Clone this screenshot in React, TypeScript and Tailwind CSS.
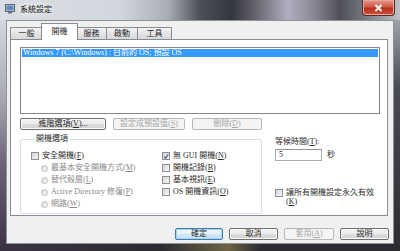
import React from 'react';

function K({ c }: { c: string }) {
  return (
    <>
      (<span className="underline">{c}</span>)
    </>
  );
}

function Check({ checked }: { checked?: boolean }) {
  return (
    <span className="w-[8px] h-[8px] shrink-0 border border-[#8e8f8f] bg-[linear-gradient(135deg,#d2d5da,#f8f8f8)] flex items-center justify-center">
      {checked && (
        <svg width="7" height="7" viewBox="0 0 7 7">
          <path d="M1 3.6 L2.9 5.4 L6.2 1" fill="none" stroke="#3e5c8a" strokeWidth="1.3" />
        </svg>
      )}
    </span>
  );
}

function Radio() {
  return (
    <span className="w-[7px] h-[7px] shrink-0 rounded-full border border-[#bcbcbc] bg-[linear-gradient(135deg,#dedede,#f6f6f6)]" />
  );
}

function Btn({
  children,
  className,
  disabled,
  primary,
}: {
  children: React.ReactNode;
  className: string;
  disabled?: boolean;
  primary?: boolean;
}) {
  const look = disabled
    ? 'border-[#b5b7ba] bg-[#f4f4f4] text-[#a6a6a6]'
    : primary
      ? 'border-[#3c7fb1] bg-[linear-gradient(180deg,#f2f8fc_0%,#e3f0f9_50%,#d3e7f5_51%,#c6dff2_100%)] shadow-[inset_0_0_0_1px_#a6d6f3]'
      : 'border-[#707070] bg-[linear-gradient(180deg,#f3f3f3_0%,#ebebeb_50%,#dddddd_51%,#d0d0d0_100%)] shadow-[inset_0_0_0_1px_#fbfbfb]';
  return (
    <div className={`h-[12px] rounded-[2px] border flex items-center justify-center ${look} ${className}`}>
      {children}
    </div>
  );
}

function Tab({ label, className }: { label: string; className: string }) {
  return (
    <div
      className={`h-[12px] -ml-px border border-b-0 border-[#898c95] bg-[linear-gradient(180deg,#f3f3f3,#e4e4e4_50%,#d9d9d9)] flex items-center justify-center ${className}`}
    >
      {label}
    </div>
  );
}

export default function App() {
  return (
    <div className="w-[400px] h-[251px] flex flex-col overflow-hidden text-[8px] leading-none text-[#2a2a2a] font-['Liberation_Serif','Noto_Sans_CJK_TC',serif] bg-[#3a3840]">
      {/* title bar */}
      <div className="h-[20px] shrink-0 flex items-start bg-[linear-gradient(90deg,#dadee4_0%,#d2d6dd_30%,#a9adb5_42%,#4c4f57_50%,#34363d_58%,#5d5d66_63%,#b2adbf_72%,#8d8a97_78%,#505157_85%,#6d7077_90%,#bfc3c9_100%)]">
        <svg className="ml-[5px] mt-[4px]" width="10" height="10" viewBox="0 0 10 10">
          <rect x="0.5" y="0.5" width="9" height="7" fill="#d9dde3" stroke="#5b6470" />
          <rect x="1.5" y="1.5" width="7" height="5" fill="#5f86b8" />
          <rect x="3" y="8" width="4" height="1.5" fill="#6d7480" />
        </svg>
        <span className="ml-[5px] mt-[6px] text-[#111] [text-shadow:0_0_4px_#fff,0_0_6px_#fff]">系統設定</span>
        <div className="flex-1" />
        <div className="mr-[5px] w-[33px] h-[16px] rounded-b-[4px] border border-t-0 border-[#5b2a25] bg-[linear-gradient(180deg,#e39a8c_0%,#cf5a48_45%,#b7311d_55%,#c9533c_100%)] shadow-[inset_0_0_0_1px_#e9a79b] flex items-center justify-center">
          <svg width="9" height="8" viewBox="0 0 9 8">
            <path d="M1.5 1 L7.5 7 M7.5 1 L1.5 7" stroke="#fff" strokeWidth="1.8" />
          </svg>
        </div>
      </div>

      <div className="flex flex-1 min-h-0">
        {/* left frame */}
        <div className="w-[6px] shrink-0 bg-[linear-gradient(180deg,#d4d8de_0%,#a9a8b2_35%,#6b6274_65%,#3f3748_100%)]" />

        {/* client */}
        <div className="w-[388px] shrink-0 border border-[#8d929a] bg-[#f0f0f0] flex flex-col">
          {/* tabs */}
          <div className="h-[18px] shrink-0 flex items-end pl-[3px]">
            <Tab label="一般" className="w-[33px] ml-0" />
            <div className="relative z-10 h-[17px] w-[37px] -mb-px -ml-[2px] -mr-[2px] border border-b-0 border-[#898c95] bg-white flex items-start justify-center pt-[4px]">
              開機
            </div>
            <Tab label="服務" className="w-[31px] ml-0" />
            <Tab label="啟動" className="w-[32px]" />
            <Tab label="工具" className="w-[35px]" />
          </div>

          {/* panel */}
          <div className="ml-[3px] w-[378px] h-[177px] shrink-0 border border-[#898c95] bg-white flex flex-col px-[9px]">
            <div className="mt-[7px] w-[360px] h-[67px] border border-[#828790] bg-white">
              <div className="mx-px mt-px h-[8px] bg-[#3399ff] text-white flex items-center pl-[1px] whitespace-nowrap">
                Windows 7 (C:\Windows) : 目前的 OS; 預設 OS
              </div>
            </div>

            <div className="mt-[4px] flex gap-[7px]">
              <Btn className="w-[86px]">
                進階選項<K c="V" />...
              </Btn>
              <Btn className="w-[72px]" disabled>
                設定成預設值<K c="S" />
              </Btn>
              <Btn className="w-[70px]" disabled>
                刪除<K c="D" />
              </Btn>
            </div>

            <div className="mt-[5px] flex">
              <fieldset className="w-[243px] h-[79px] border border-[#d5dfe5] rounded-[2px] flex pl-[10px] pt-[7px]">
                <legend className="ml-[3px] px-[2px]">開機選項</legend>
                <div className="w-[131px] flex flex-col">
                  <div className="h-[12px] flex items-center gap-[3px]">
                    <Check />
                    <span>
                      安全開機<K c="F" />
                    </span>
                  </div>
                  <div className="h-[12px] flex items-center gap-[3px] pl-[10px] text-[#8a8a8a]">
                    <Radio />
                    <span>
                      最基本安全開機方式<K c="M" />
                    </span>
                  </div>
                  <div className="h-[12px] flex items-center gap-[3px] pl-[10px] text-[#8a8a8a]">
                    <Radio />
                    <span>
                      替代殼層<K c="L" />
                    </span>
                  </div>
                  <div className="h-[12px] flex items-center gap-[3px] pl-[10px] text-[#8a8a8a]">
                    <Radio />
                    <span>
                      Active Directory 修復<K c="P" />
                    </span>
                  </div>
                  <div className="h-[12px] flex items-center gap-[3px] pl-[10px] text-[#8a8a8a]">
                    <Radio />
                    <span>
                      網路<K c="W" />
                    </span>
                  </div>
                </div>
                <div className="flex flex-col">
                  <div className="h-[12px] flex items-center gap-[3px]">
                    <Check checked />
                    <span>
                      無 GUI 開機<K c="N" />
                    </span>
                  </div>
                  <div className="h-[12px] flex items-center gap-[3px]">
                    <Check />
                    <span>
                      開機記錄<K c="B" />
                    </span>
                  </div>
                  <div className="h-[12px] flex items-center gap-[3px]">
                    <Check />
                    <span>
                      基本視訊<K c="E" />
                    </span>
                  </div>
                  <div className="h-[12px] flex items-center gap-[3px]">
                    <Check />
                    <span>
                      OS 開機資訊<K c="O" />
                    </span>
                  </div>
                </div>
              </fieldset>

              <div className="ml-[13px] flex flex-col pt-[3px]">
                <span>
                  等候時間<K c="T" />:
                </span>
                <div className="mt-[3px] flex items-center">
                  <div className="w-[47px] h-[12px] border border-[#abadb3] border-t-[#8f939b] bg-white flex items-center pl-[3px]">
                    5
                  </div>
                  <span className="ml-[5px]">秒</span>
                </div>
                <div className="mt-[28px] flex items-start gap-[3px]">
                  <Check />
                  <span className="w-[92px] leading-[9px] -mt-[1px]">
                    讓所有開機設定永久有效<K c="K" />
                  </span>
                </div>
              </div>
            </div>
          </div>

          {/* dialog buttons */}
          <div className="mt-[12px] flex justify-end gap-[6px] pr-[4px]">
            <Btn className="w-[48px]" primary>
              確定
            </Btn>
            <Btn className="w-[49px]">取消</Btn>
            <Btn className="w-[50px]" disabled>
              套用<K c="A" />
            </Btn>
            <Btn className="w-[49px]">說明</Btn>
          </div>
        </div>

        {/* right frame */}
        <div className="flex-1 bg-[linear-gradient(180deg,#9da1a8_0%,#4a4a52_30%,#2d2c33_100%)]" />
      </div>

      {/* bottom frame */}
      <div className="h-[7px] shrink-0 bg-[linear-gradient(90deg,#3b3344_0%,#2b2a31_40%,#6e6344_57%,#2d2c33_65%,#2a2a30_100%)]" />
    </div>
  );
}
